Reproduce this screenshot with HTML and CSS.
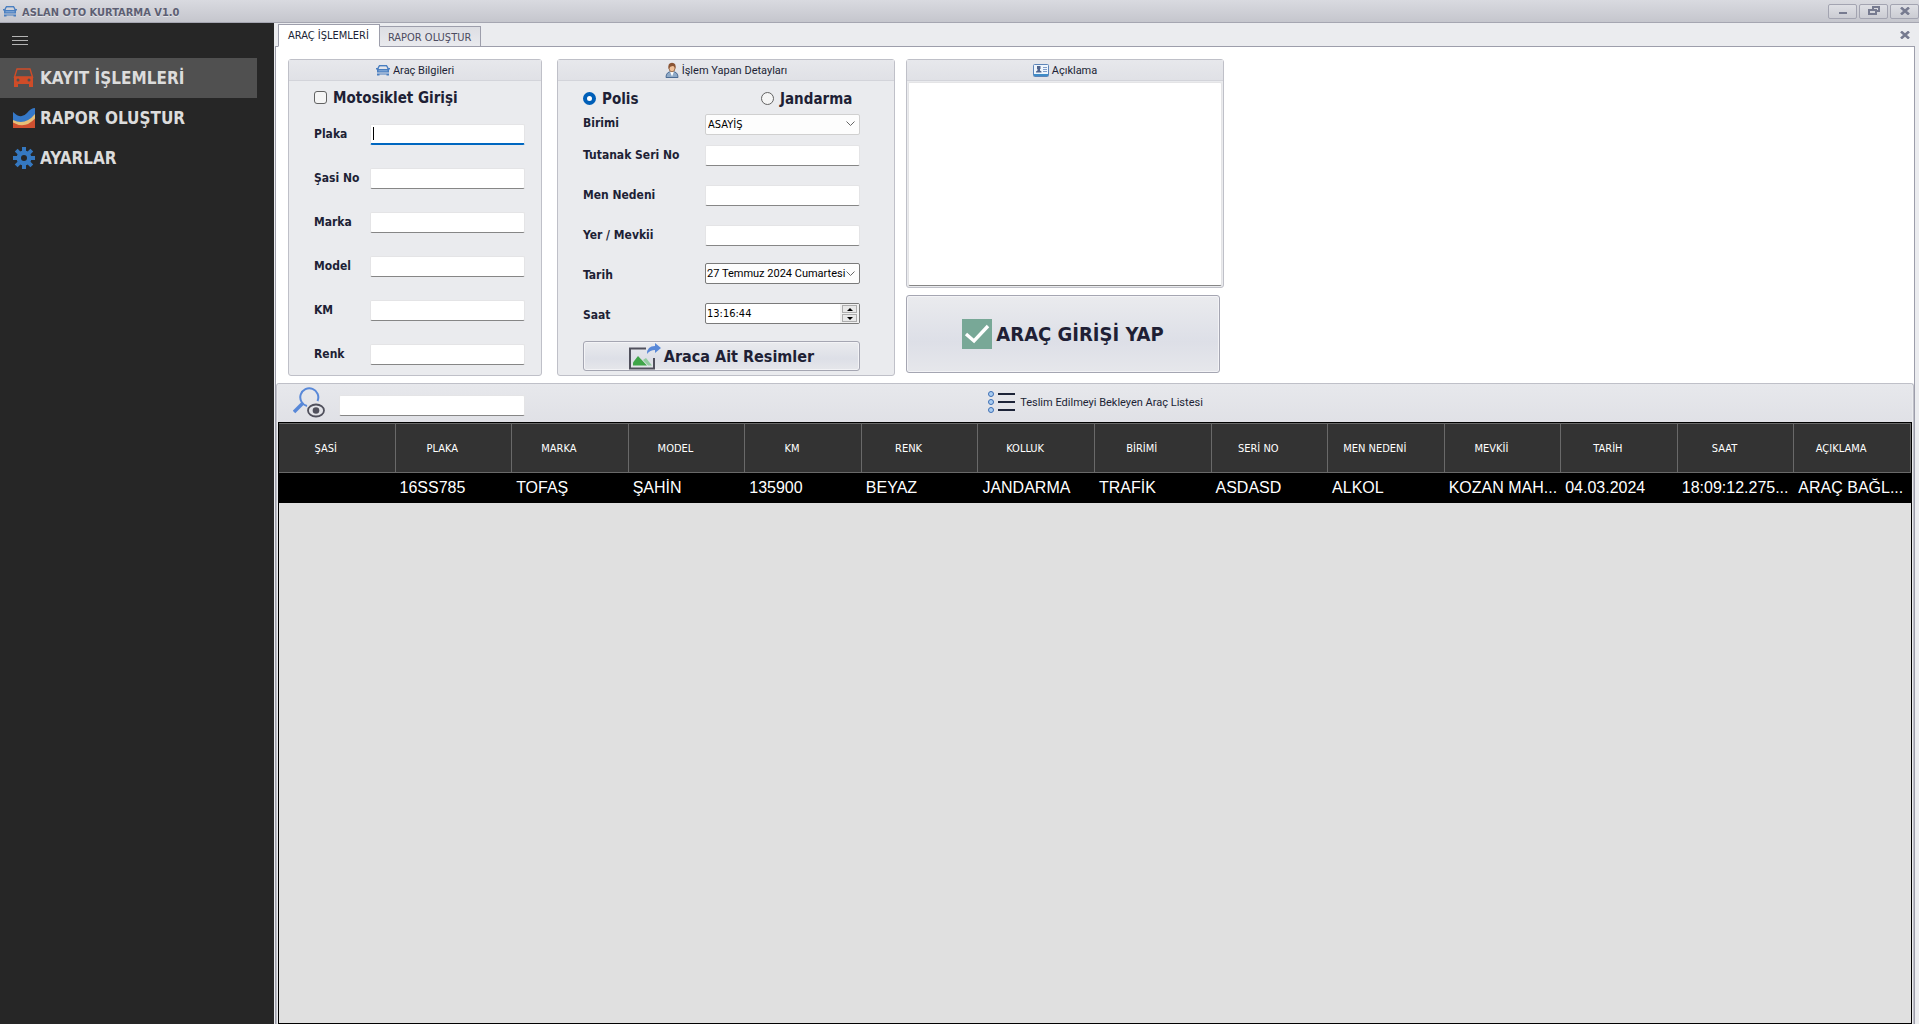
FILE: index.html
```html
<!DOCTYPE html>
<html lang="tr">
<head>
<meta charset="utf-8">
<title>ASLAN OTO KURTARMA V1.0</title>
<link rel="stylesheet" href="styles.css">
</head>
<body>
<svg class="sprite" aria-hidden="true">
  <symbol id="car" viewBox="0 0 14 11">
    <path d="M3 0h8v1.400H3z" fill="#4a7fc0"/>
    <path d="M3.300 .7L1.900 3.600M10.700 .7l1.400 2.900" fill="none" stroke="#4a7fc0" stroke-width="1.300"/>
    <path d="M0 3h2.500v1h9V3H14v1.500h-1V7.500H1V4.500H0z" fill="#4a7fc0"/>
    <path d="M2.500 5.800h9" stroke="#9dbbe0" stroke-width=".8"/>
    <path d="M1 8.500h12V10.500h-2.500V9.500h-7v1H1z" fill="#4a7fc0"/>
  </symbol>
</svg>

<header class="titlebar">
  <svg class="car-icon"><use href="#car"/></svg>
  <h1 class="app-title">ASLAN OTO KURTARMA V1.0</h1>
  <div class="window-buttons">
    <button class="window-button" aria-label="Küçült"><svg width="10" height="10"><path d="M1 6h8v2H1z" fill="#777b90"/></svg></button>
    <button class="window-button" aria-label="Geri yükle"><svg width="12" height="10"><path d="M5 4V1h6v4H8M1 4h7v4H1z" fill="none" stroke="#777b90" stroke-width="2"/></svg></button>
    <button class="window-button" aria-label="Kapat"><svg width="10" height="8"><path d="M1 .5l8 7M9 .5l-8 7" stroke="#777b90" stroke-width="2.600"/></svg></button>
  </div>
</header>

<div class="workspace">
  <nav class="sidebar">
    <button class="menu-toggle" aria-label="Menü"><svg width="16" height="10"><path d="M0 .5h16M0 4.500h16M0 8.500h16" stroke="#b4b4b4"/></svg></button>
    <a class="nav-item nav-item-active" href="#kayit">
      <svg class="nav-icon" viewBox="0 0 22 22"><path d="M4 2h13l2.500 8H1.500z" fill="none" stroke="#cf4c28" stroke-width="1.400"/><path d="M1 10h19v10h-4v-3H5v3H1z" fill="#cf4c28"/><circle cx="5" cy="13" r="1.500" fill="#505050"/><circle cx="16" cy="13" r="1.500" fill="#505050"/></svg>
      KAYIT İŞLEMLERİ</a>
    <a class="nav-item" href="#rapor">
      <svg class="nav-icon" viewBox="0 0 22 22"><path d="M0 13q12 8 22-3v11H0z" fill="#cf5030"/><path d="M0 10q12 8 22-4v5.500q-10 11-22 4z" fill="#e6c078"/><path d="M0 5q8 8 14 1 4-5 8-5v6q-10 12-22 6z" fill="#3578c8"/></svg>
      RAPOR OLUŞTUR</a>
    <a class="nav-item" href="#ayarlar">
      <svg class="nav-icon" viewBox="0 0 22 22"><g stroke="#3578c0" stroke-width="4"><path d="M11 0v22M0 11h22M3.200 3.200l15.600 15.600M18.800 3.200L3.200 18.800"/></g><circle cx="11" cy="11" r="7.500" fill="#3578c0"/><circle cx="11" cy="11" r="3" fill="#262626"/></svg>
      AYARLAR</a>
  </nav>

  <main class="content">
    <div class="tab-strip">
      <button class="tab tab-active">ARAÇ İŞLEMLERİ</button>
      <button class="tab">RAPOR OLUŞTUR</button>
      <button class="tab-close" aria-label="Sekmeyi kapat"><svg width="10" height="8"><path d="M1 .5l8 7M9 .5l-8 7" stroke="#777b90" stroke-width="2.600"/></svg></button>
    </div>

    <div class="page">
      <form class="forms">
        <section class="group vehicle">
          <h2 class="group-title"><svg class="car-icon"><use href="#car"/></svg>Araç Bilgileri</h2>
          <label class="choice motorcycle"><input type="checkbox" class="check">Motosiklet Girişi</label>
          <div class="vehicle-fields">
            <label for="plaka">Plaka</label><div class="caret-field"><input class="field field-focused" id="plaka" type="text"><span class="caret"></span></div>
            <label for="sasi">Şasi No</label><input class="field" id="sasi" type="text">
            <label for="marka">Marka</label><input class="field" id="marka" type="text">
            <label for="model">Model</label><input class="field" id="model" type="text">
            <label for="km">KM</label><input class="field" id="km" type="text">
            <label for="renk">Renk</label><input class="field" id="renk" type="text">
          </div>
        </section>

        <section class="group officer">
          <h2 class="group-title">
            <svg width="14" height="16" viewBox="0 0 14 16"><path d="M1 15.500q0-6 6-6t6 6z" fill="#8faac8" stroke="#4c6c94"/><path d="M5 9.500l2 5 2-5z" fill="#fff"/><ellipse cx="7" cy="6" rx="3" ry="3.800" fill="#f0c098" stroke="#8a5a38" stroke-width=".8"/><path d="M3.500 7Q2.500 .8 7 .8T10.500 7Q9.800 4 7.500 4T3.500 7z" fill="#8a5434"/></svg>İşlem Yapan Detayları</h2>
          <div class="choices">
            <label class="choice"><input type="radio" name="kolluk" class="radio" checked>Polis</label>
            <label class="choice"><input type="radio" name="kolluk" class="radio">Jandarma</label>
          </div>
          <div class="officer-fields">
            <label class="officer-unit" for="birim">Birimi</label><select class="picker" id="birim"><option>ASAYİŞ</option></select>
            <label for="seri">Tutanak Seri No</label><input class="field" id="seri" type="text">
            <label for="men">Men Nedeni</label><input class="field" id="men" type="text">
            <label for="yer">Yer / Mevkii</label><input class="field" id="yer" type="text">
            <label for="tarih">Tarih</label><select class="picker picker-date" id="tarih"><option>27 Temmuz 2024 Cumartesi</option></select>
            <label for="saat">Saat</label>
            <div class="spinner">
              <input class="spinner-input" id="saat" type="text" value="13:16:44">
              <div class="spinner-buttons">
                <button type="button" class="spin" aria-label="Artır"><svg width="6" height="3"><path d="M0 3l3-3 3 3z"/></svg></button>
                <button type="button" class="spin" aria-label="Azalt"><svg width="6" height="3"><path d="M0 0l3 3 3-3z"/></svg></button>
              </div>
            </div>
          </div>
          <button type="button" class="push-button pictures-button">
            <svg width="32" height="27" viewBox="0 0 32 27"><path d="M17 5.500H1v20h24V15" fill="none" stroke="#50505c" stroke-width="2"/><path d="M4 22.500v-3l5-6.500 9 9.500z" fill="#3fa548"/><path d="M14 17l3-2 6 7.500h-4z" fill="#92cca0"/><path d="M18 11q0-8 8-8V0l6 5-6 5V7q-5 0-8 4z" fill="#5888d8"/></svg>Araca Ait Resimler</button>
        </section>

        <div class="note-column">
          <section class="group note">
            <h2 class="group-title">
              <svg width="16" height="13" viewBox="0 0 16 13"><rect x=".5" y=".5" width="15" height="12" rx="1" fill="#eef5fc" stroke="#5c84b8"/><path d="M1 10h14v2H1z" fill="#3f8cc8"/><path d="M4 2h3.500v3H7v1.500l1.500 1v1H3v-1l1.500-1V5H4z" fill="#50648c"/><path d="M10 3.500h4M10 5.500h4M10 7.500h4" stroke="#7f9cc8"/></svg><label for="aciklama">Açıklama</label></h2>
            <textarea class="note-text" id="aciklama"></textarea>
          </section>
          <button type="button" class="push-button submit-button">
            <svg width="30" height="30"><path d="M0 0h30v30H0z" fill="#78a897"/><path d="M4 15l8 7L26 7" fill="none" stroke="#fff" stroke-width="3.400"/></svg>ARAÇ GİRİŞİ YAP</button>
        </div>
      </form>

      <section class="list-panel">
        <div class="list-header">
          <div class="search">
            <svg width="32" height="31" viewBox="0 0 32 31"><path d="M24.500 14A9 9 0 1 0 14 19" fill="none" stroke="#5888d8" stroke-width="2"/><path d="M1 25l9-9" stroke="#5888d8" stroke-width="3.600"/><ellipse cx="23" cy="23.500" rx="8" ry="6" fill="none" stroke="#50505c" stroke-width="1.800"/><circle cx="23" cy="23.500" r="3.300" fill="#50505c"/></svg>
            <input class="field search-field" type="search" aria-label="Ara">
          </div>
          <h2 class="list-title">
            <svg width="29" height="24" viewBox="0 0 29 24"><g fill="#a9cdf2" stroke="#3e6fb4"><circle cx="4" cy="4" r="2.500"/><circle cx="4" cy="12" r="2.500"/><circle cx="4" cy="20" r="2.500"/></g><path d="M11 4h17M11 12h17M11 20h17" stroke="#1d2438" stroke-width="2"/></svg>Teslim Edilmeyi Bekleyen Araç Listesi</h2>
        </div>
        <div class="grid-area">
          <table class="grid">
            <thead>
              <tr><th>ŞASİ</th><th>PLAKA</th><th>MARKA</th><th>MODEL</th><th>KM</th><th>RENK</th><th>KOLLUK</th><th>BİRİMİ</th><th>SERİ NO</th><th>MEN NEDENİ</th><th>MEVKİİ</th><th>TARİH</th><th>SAAT</th><th>AÇIKLAMA</th></tr>
            </thead>
            <tbody>
              <tr><td></td><td>16SS785</td><td>TOFAŞ</td><td>ŞAHİN</td><td>135900</td><td>BEYAZ</td><td>JANDARMA</td><td>TRAFİK</td><td>ASDASD</td><td>ALKOL</td><td>KOZAN MAH...</td><td>04.03.2024</td><td>18:09:12.275...</td><td>ARAÇ BAĞL...</td></tr>
            </tbody>
          </table>
        </div>
      </section>
    </div>
  </main>
</div>
</body>
</html>
```
FILE: styles.css
```css
* { box-sizing: border-box; }

body {
  display: flex;
  flex-direction: column;
  min-height: 100vh;
  margin: 0;
  background: #ebecef;
  color: #201f35;
  font-family: "DejaVu Sans Condensed", "DejaVu Sans", sans-serif;
  font-size: 11px;
}

h1, h2 { margin: 0; font-size: 11px; font-weight: normal; }
button, input, select, textarea { margin: 0; padding: 0; font: inherit; color: inherit; }
button { display: flex; align-items: center; justify-content: center; }
svg { flex: none; }
.sprite { display: none; }
.car-icon { width: 14px; height: 11px; }

/* Title bar */
.titlebar {
  display: flex;
  align-items: center;
  gap: 5px;
  height: 23px;
  padding-left: 3px;
  border-bottom: 1px solid #a5a6b1;
  background: linear-gradient(#d9dae0, #c5c6cd);
}
.app-title { padding-top: 2px; color: #5d5f73; font-weight: bold; text-shadow: 0 1px 0 #e4e5ea; }
.window-buttons { display: flex; gap: 2px; margin-left: auto; }
.window-button {
  width: 29px;
  height: 15px;
  border: 1px solid #a3a4b1;
  border-radius: 2px;
  background: linear-gradient(#dfe0e5, #cbccd3);
}

/* Sidebar */
.workspace { display: flex; flex: 1; }
.sidebar { flex: none; width: 274px; background: #262626; }
.menu-toggle { width: 40px; height: 35px; border: 0; background: none; }
.nav-item {
  display: flex;
  align-items: center;
  gap: 5px;
  width: 257px;
  height: 40px;
  padding-left: 13px;
  color: #dcdcdc;
  font-size: 17px;
  font-weight: bold;
  text-decoration: none;
}
.nav-item-active { background: #505050; }
.nav-icon { width: 22px; height: 22px; }

/* Tabs */
.content { display: flex; flex: 1; flex-direction: column; min-width: 0; padding: 0 4px 0 1px; }
.tab-strip { display: flex; align-items: flex-end; height: 24px; padding: 0 4px 0 3px; }
.tab {
  height: 21px;
  padding: 1px 9px 0 8px;
  border: 1px solid #9d9eab;
  border-left: 0;
  background: linear-gradient(#dddee3, #e9eaee);
  color: #4c4b60;
}
.tab-active {
  position: relative;
  height: 23px;
  padding: 0 10px 0 9px;
  border-left: 1px solid #9d9eab;
  border-bottom-color: #fff;
  background: #fff;
  color: #201f35;
}
.tab-close { align-self: center; width: 12px; height: 12px; margin-left: auto; border: 0; background: none; }

.page {
  display: flex;
  flex: 1;
  flex-direction: column;
  margin-top: -1px;
  border: 1px solid #9d9eab;
  border-bottom: 0;
  background: #fff;
}

/* Form groups */
.forms { display: flex; padding: 12px 12px 7px; }
.group { border: 1px solid #bfc0c8; border-radius: 3px; background: #eaebee; }
.group-title {
  display: flex;
  align-items: center;
  justify-content: center;
  gap: 3px;
  height: 21px;
  border-bottom: 1px solid #d3d4da;
  background: linear-gradient(#e7e8ec, #e0e1e6);
}
.group-title, .list-title { font-family: Roboto, sans-serif; }
.vehicle { width: 254px; height: 317px; margin-right: 15px; }
.officer { width: 338px; height: 317px; margin-right: 11px; }

.choice { display: flex; align-items: center; gap: 6px; font-size: 15px; font-weight: bold; }
.check, .radio { appearance: none; width: 13px; height: 13px; border: 1px solid #626262; background: #f5f5f5; }
.check { border-radius: 3px; }
.radio { border-radius: 50%; }
.radio:checked { border: 4px solid #005fb8; background: #fff; }
.motorcycle { padding: 6px 25px 0; height: 27px; }

.vehicle-fields {
  display: grid;
  grid-template-columns: 56px 155px;
  grid-auto-rows: 44px;
  align-items: center;
  padding: 4px 25px;
  font-size: 12px;
  font-weight: bold;
}
.field {
  width: 100%;
  height: 21px;
  border: 1px solid #e4e4e6;
  border-bottom-color: #868686;
  border-radius: 2px;
  outline: 0;
  background: #fff;
}
.field-focused { border-bottom: 2px solid #0067c0; }
.caret-field { position: relative; }
.caret { position: absolute; top: 3px; left: 3px; width: 1px; height: 13px; background: #000; }

.choices { display: grid; grid-template-columns: 178px 1fr; height: 32px; padding: 8px 25px 5px; }
.officer-fields {
  display: grid;
  grid-template-columns: 122px 155px;
  grid-template-rows: 22px;
  grid-auto-rows: 40px;
  align-items: center;
  padding: 0 25px;
  font-size: 12px;
  font-weight: bold;
}
.officer-unit { padding-bottom: 2px; }
.picker {
  width: 100%;
  height: 21px;
  padding: 0 2px;
  appearance: none;
  border: 1px solid #d0d0d0;
  border-radius: 2px;
  background: #fdfdfd url("data:image/svg+xml,%3Csvg xmlns='http://www.w3.org/2000/svg' width='9' height='6'%3E%3Cpath d='M.5 .5l4 4 4-4' fill='none' stroke='%23666'/%3E%3C/svg%3E") no-repeat right 4px center;
  color: #000;
  font-size: 11px;
  font-weight: normal;
}
.picker-date { padding: 0 1px; border-color: #7a7a7a; font-family: Roboto, sans-serif; }
.spinner {
  display: flex;
  height: 21px;
  border: 1px solid #7a7a7a;
  border-radius: 2px;
  background: #fff;
  color: #000;
  font-size: 11px;
  font-weight: normal;
}
.picker-date, .spinner { margin-bottom: 3px; }
.spinner-input { flex: 1; min-width: 0; padding-left: 1px; border: 0; background: none; }
.spinner-buttons { display: flex; flex-direction: column; gap: 1px; padding: 1px 2px; background: #f0f0f0; }
.spin { flex: 1; width: 15px; border: 1px solid #adadad; background: #e8e8e8; }

.push-button {
  border: 1px solid #a5a6b2;
  border-radius: 3px;
  background: linear-gradient(#eaebee, #dddfe7 60%, #e6e7eb);
  box-shadow: inset 0 0 0 1px #f3f3f6;
  font-weight: bold;
}
.pictures-button { gap: 3px; width: 277px; height: 30px; margin: 6px 25px 0; font-size: 16px; }

.note-column { display: flex; flex-direction: column; gap: 7px; }
.note { display: flex; flex-direction: column; width: 318px; height: 229px; }
.note-text {
  flex: 1;
  margin: 1px;
  border: 1px solid #e4e4e6;
  border-bottom-color: #868686;
  border-radius: 2px;
  outline: 0;
  background: #fff;
  resize: none;
}
.submit-button { gap: 4px; width: 314px; height: 78px; font-size: 20px; }

/* Vehicle list */
.list-panel {
  display: flex;
  flex: 1;
  flex-direction: column;
  padding: 0 1px;
  border: 1px solid #bfc0c8;
  border-bottom: 0;
  border-radius: 3px 3px 0 0;
  background: #eaebee;
}
.list-header {
  display: grid;
  grid-template-columns: 1fr auto 1fr;
  align-items: center;
  height: 38px;
  padding-bottom: 2px;
  background: linear-gradient(#e7e8ec, #e0e1e6);
}
.search { display: flex; align-items: flex-end; gap: 14px; padding-left: 15px; }
.search-field { width: 186px; margin-bottom: 2px; }
.list-title { display: flex; align-items: center; gap: 4px; }

.grid-area { flex: 1; border: 1px solid #000; background: #e0e0e0; }
.grid { width: 100%; table-layout: fixed; border-spacing: 0; }
.grid th {
  height: 50px;
  padding: 1px 22px 0 0;
  border: 1px solid #696969;
  border-left: 0;
  background: #333;
  color: #fff;
  font-weight: normal;
  white-space: nowrap;
}
.grid td {
  height: 30px;
  padding: 0 0 0 4px;
  background: #000;
  color: #fff;
  font: 16px "Liberation Sans", Arial, sans-serif;
  white-space: nowrap;
}
```
